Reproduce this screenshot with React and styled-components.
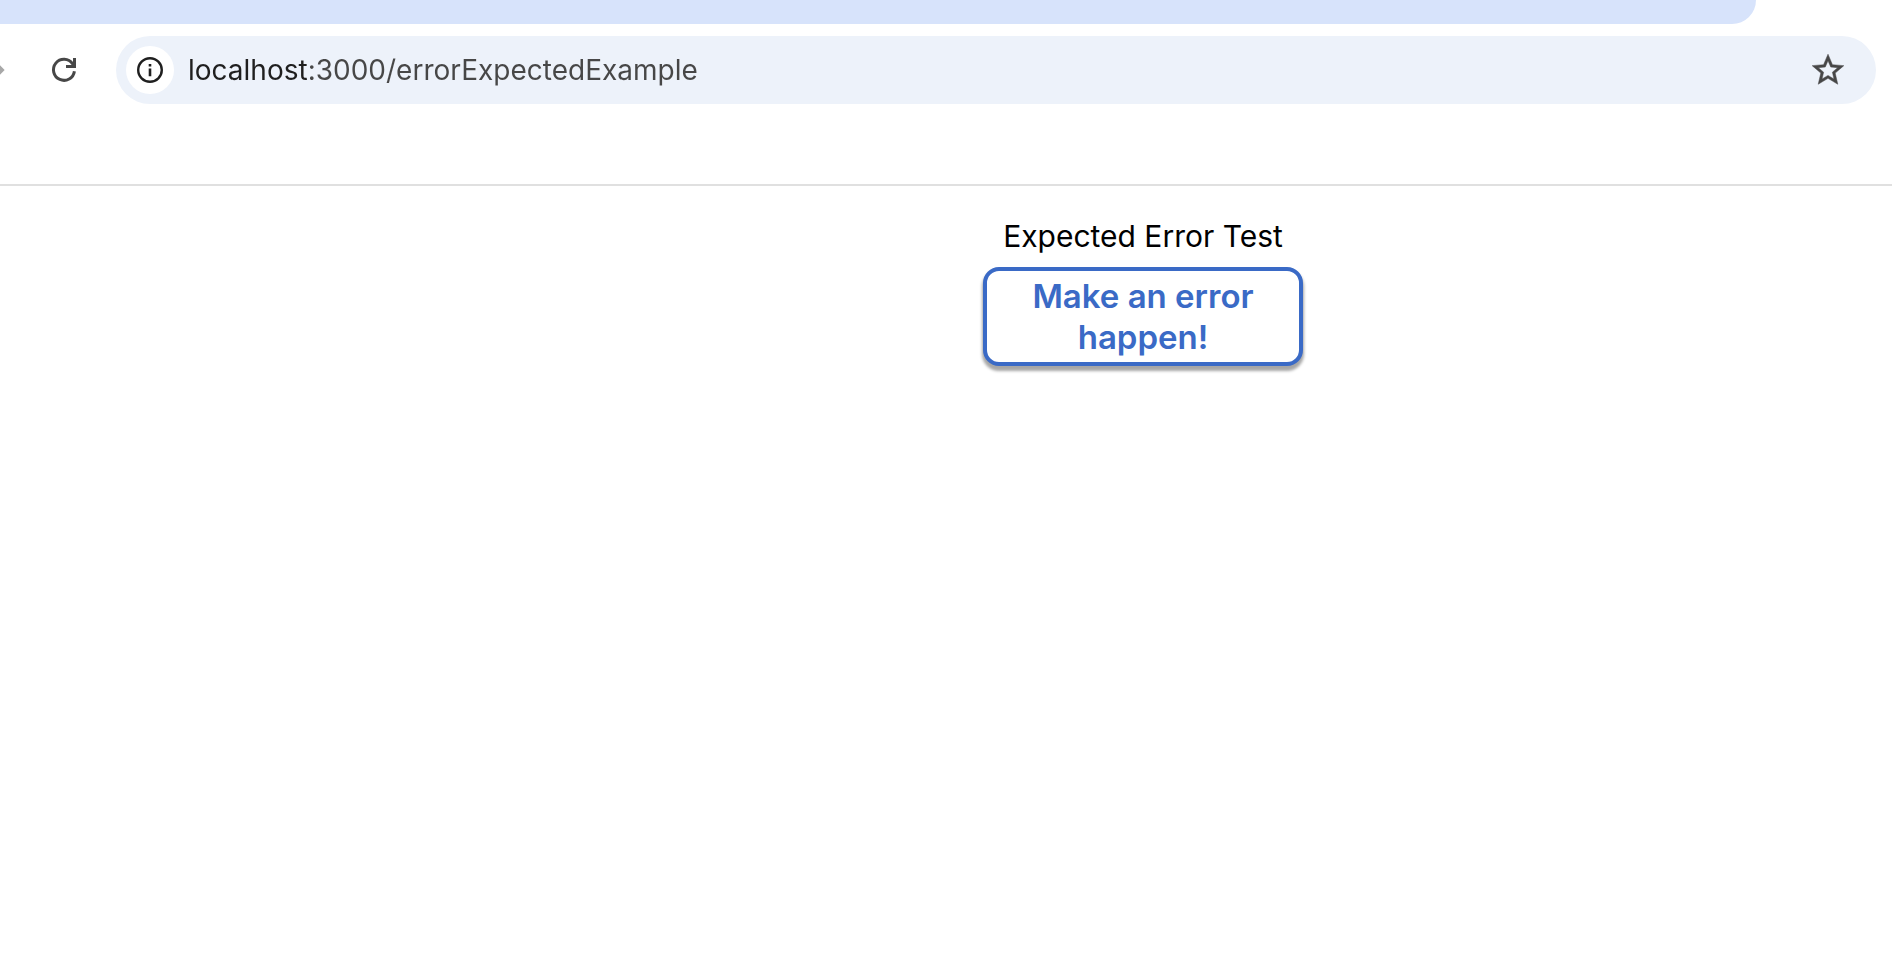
import React, { useState } from "react";
import styled, { createGlobalStyle } from "styled-components";

const GlobalStyle = createGlobalStyle`
  *, *::before, *::after {
    box-sizing: border-box;
  }

  body {
    margin: 0;
    background: #ffffff;
    font-family: Inter, "Liberation Sans", sans-serif;
  }
`;

const Browser = styled.header`
  border-bottom: 2px solid #e0e0e0;
  overflow: hidden;
`;

const TabStrip = styled.div`
  height: 24px;
  margin-right: 136px;
  border-bottom-right-radius: 24px;
  background: #d7e3fb;
`;

const Toolbar = styled.nav`
  display: flex;
  align-items: center;
  gap: 34px;
  margin-left: -24px;
  padding: 12px 16px 80px 0;
`;

const IconButton = styled.button`
  display: flex;
  align-items: center;
  justify-content: center;
  flex: none;
  width: ${(p) => p.$size}px;
  height: ${(p) => p.$size}px;
  padding: 0;
  border: 0;
  border-radius: 50%;
  background: ${(p) => p.$fill || "transparent"};
  color: ${(p) => p.$color || "#474747"};
`;

const AddressBar = styled.div`
  display: flex;
  align-items: center;
  flex: 1;
  min-width: 0;
  height: 68px;
  padding: 0 28px 0 10px;
  border-radius: 34px;
  background: #edf2fa;
`;

const Address = styled.input`
  flex: 1;
  min-width: 0;
  height: 40px;
  margin: 0 14px;
  padding: 0;
  border: 0;
  outline: 0;
  font: 400 28px/40px Inter, "Liberation Sans", sans-serif;
  color: #474747;
  background: linear-gradient(to right, #1f1f1f 120px, #474747 120px);
  background-clip: text;
  -webkit-background-clip: text;
  -webkit-text-fill-color: transparent;
`;

const Page = styled.main`
  display: flex;
  flex-direction: column;
  align-items: center;
  gap: 12px;
  padding: 31px 0 32px 394px;
`;

const Title = styled.div`
  font-size: 30px;
  line-height: 38px;
  color: #000000;
`;

const ErrorButton = styled.button`
  width: 320px;
  padding: 5px 40px 4px;
  border: 4px solid #3a6ac6;
  border-radius: 16px;
  background: #ffffff;
  box-shadow: 0 4px 3px 1px rgba(0, 0, 0, 0.35);
  font: 600 33px/41px Inter, "Liberation Sans", sans-serif;
  color: #3a6ac6;
`;

const ForwardIcon = () => (
  <svg width="32" height="32" viewBox="0 0 24 24" fill="currentColor" aria-hidden="true">
    <path d="M12 4l-1.41 1.41L16.17 11H4v2h12.17l-5.58 5.59L12 20l8-8z" />
  </svg>
);

const ReloadIcon = () => (
  <svg width="36" height="36" viewBox="0 0 36 36" fill="none" stroke="currentColor" strokeWidth="3" aria-hidden="true">
    <path d="M28.4 19.2A10.5 10.5 0 1 1 26.6 11.8L28 14" />
    <path d="M28.5 6V14.5H20" />
  </svg>
);

const InfoIcon = () => (
  <svg width="26" height="26" viewBox="0 0 26 26" fill="none" stroke="currentColor" aria-hidden="true">
    <circle cx="13" cy="13" r="11.8" strokeWidth="2.4" />
    <path d="M13 7v2.4M13 11.5v7.8" strokeWidth="2.6" />
  </svg>
);

const StarIcon = () => (
  <svg width="38" height="38" viewBox="0 0 24 24" fill="currentColor" stroke="currentColor" strokeWidth="0.3" aria-hidden="true">
    <path d="M22 9.24l-7.19-.62L12 2 9.19 8.63 2 9.24l5.46 4.73L5.82 21 12 17.27 18.18 21l-1.63-7.03L22 9.24zM12 15.4l-3.76 2.27 1-4.28-3.32-2.88 4.38-.38L12 6.1l1.71 4.04 4.38.38-3.32 2.88 1 4.28L12 15.4z" />
  </svg>
);

export default function App() {
  const [url, setUrl] = useState("localhost:3000/errorExpectedExample");

  return (
    <>
      <GlobalStyle />
      <Browser>
        <TabStrip />
        <Toolbar aria-label="Browser toolbar">
          <IconButton type="button" aria-label="Forward" $size={36} $color="#a8a8a8">
            <ForwardIcon />
          </IconButton>
          <IconButton type="button" aria-label="Reload" $size={36}>
            <ReloadIcon />
          </IconButton>
          <AddressBar>
            <IconButton type="button" aria-label="View site information" $size={48} $fill="#ffffff" $color="#1f1f1f">
              <InfoIcon />
            </IconButton>
            <Address
              type="text"
              aria-label="Address"
              spellCheck={false}
              value={url}
              onChange={(e) => setUrl(e.target.value)}
            />
            <IconButton type="button" aria-label="Bookmark this page" $size={40}>
              <StarIcon />
            </IconButton>
          </AddressBar>
        </Toolbar>
      </Browser>
      <Page>
        <Title>Expected Error Test</Title>
        <ErrorButton type="button">Make an error happen!</ErrorButton>
      </Page>
    </>
  );
}
